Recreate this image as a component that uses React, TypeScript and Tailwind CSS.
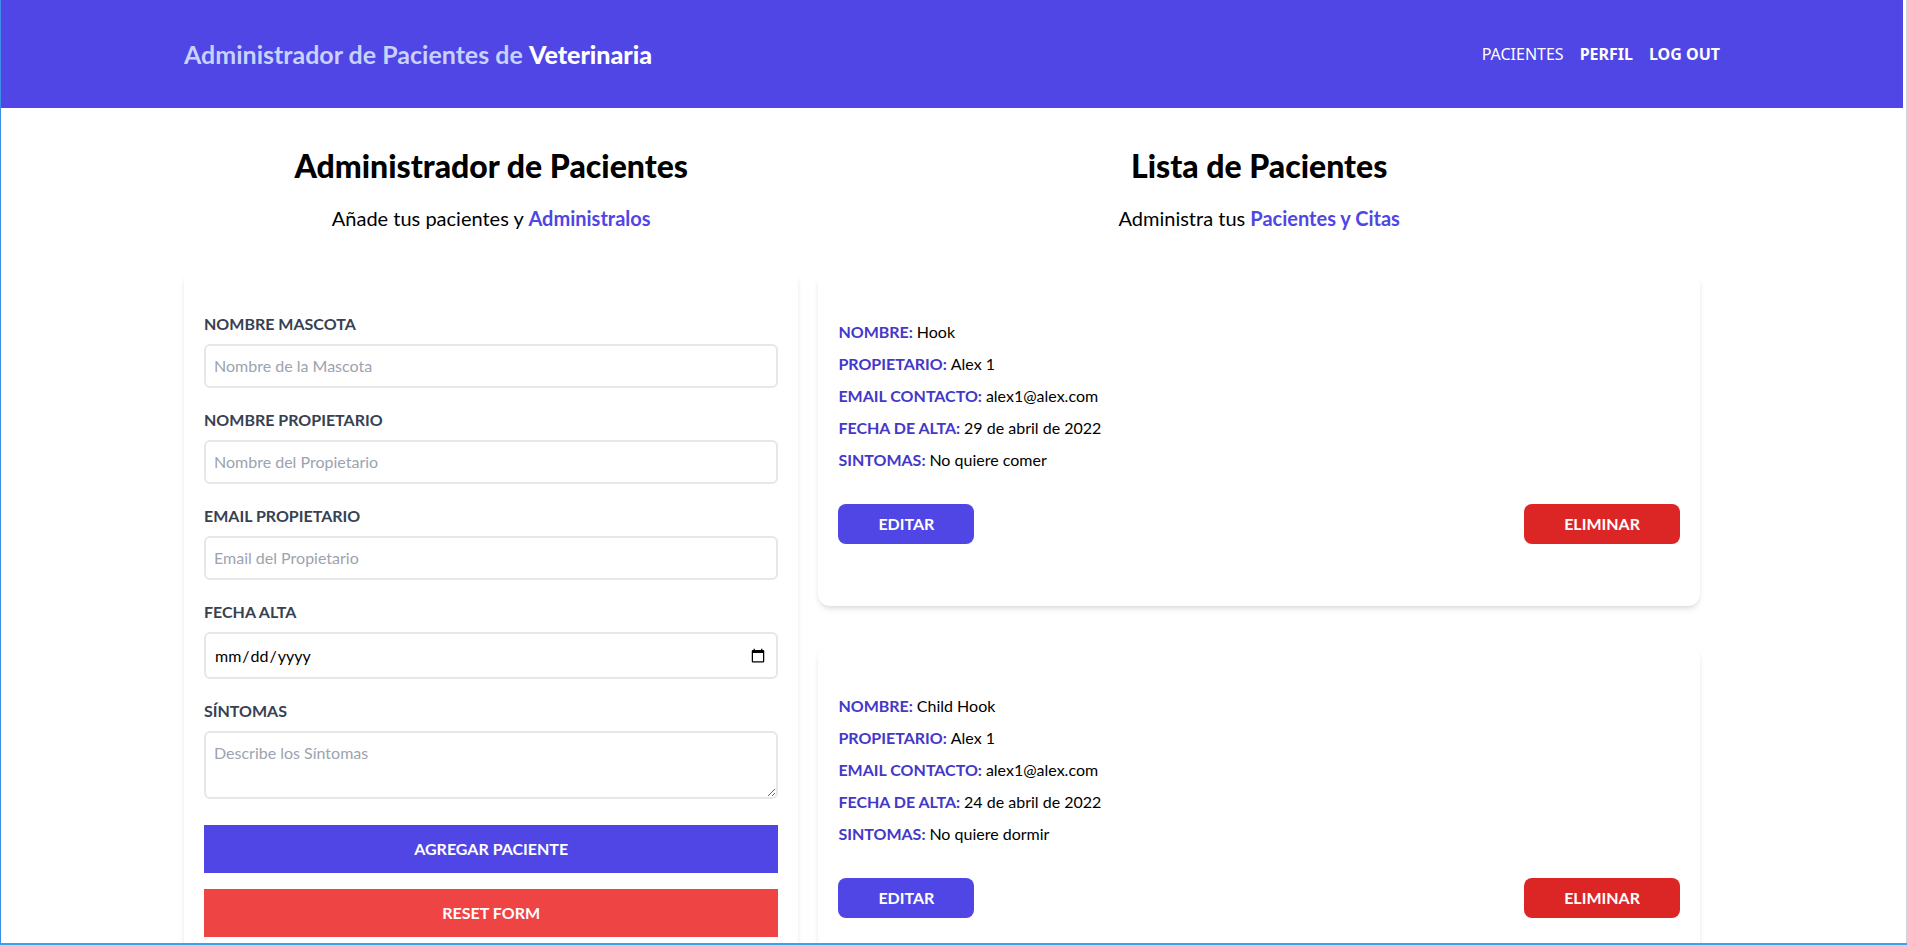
import { useState } from 'react';

interface Paciente {
  id: number;
  nombre: string;
  propietario: string;
  email: string;
  fecha: string;
  sintomas: string;
}

const pacientes_iniciales: Paciente[] = [
  {
    id: 1,
    nombre: 'Hook',
    propietario: 'Alex 1',
    email: 'alex1@alex.com',
    fecha: '29 de abril de 2022',
    sintomas: 'No quiere comer',
  },
  {
    id: 2,
    nombre: 'Child Hook',
    propietario: 'Alex 1',
    email: 'alex1@alex.com',
    fecha: '24 de abril de 2022',
    sintomas: 'No quiere dormir',
  },
];

const Header = () => (
  <header className="bg-[#4f46e5] py-10">
    <div className="container mx-auto flex items-center justify-between">
      <h1 className="text-[25px] leading-7 font-bold text-[#c7d2fe]">
        Administrador de Pacientes de{' '}
        <span className="font-black text-white">Veterinaria</span>
      </h1>
      <nav className="flex items-center gap-4 font-['Noto_Sans',sans-serif] text-base text-white uppercase">
        <a href="#" className="font-normal">Pacientes</a>
        <a href="#" className="font-bold">Perfil</a>
        <a href="#" className="font-bold">Log Out</a>
      </nav>
    </div>
  </header>
);

const Campo = ({ label, children }: { label: string; children: React.ReactNode }) => (
  <div className="mb-5">
    <label className="block text-[#374151] uppercase font-bold">{label}</label>
    {children}
  </div>
);

const Formulario = () => {
  const [nombre, setNombre] = useState('');
  const [propietario, setPropietario] = useState('');
  const [email, setEmail] = useState('');
  const [fecha, setFecha] = useState('');
  const [sintomas, setSintomas] = useState('');

  const input_cls =
    'border-2 border-[#e5e7eb] w-full p-2 mt-2 placeholder-[#9ca3af] rounded-md text-black outline-none';

  return (
    <form className="bg-white shadow-md rounded-lg py-10 px-5 mb-10">
      <Campo label="Nombre Mascota">
        <input
          type="text"
          placeholder="Nombre de la Mascota"
          className={input_cls}
          value={nombre}
          onChange={(e) => setNombre(e.target.value)}
        />
      </Campo>
      <Campo label="Nombre Propietario">
        <input
          type="text"
          placeholder="Nombre del Propietario"
          className={input_cls}
          value={propietario}
          onChange={(e) => setPropietario(e.target.value)}
        />
      </Campo>
      <Campo label="Email Propietario">
        <input
          type="email"
          placeholder="Email del Propietario"
          className={input_cls}
          value={email}
          onChange={(e) => setEmail(e.target.value)}
        />
      </Campo>
      <Campo label="Fecha Alta">
        <input
          type="date"
          className={input_cls + ' h-[47px]'}
          value={fecha}
          onChange={(e) => setFecha(e.target.value)}
        />
      </Campo>
      <Campo label="Síntomas">
        <textarea
          rows={2}
          placeholder="Describe los Síntomas"
          className={input_cls}
          value={sintomas}
          onChange={(e) => setSintomas(e.target.value)}
        />
      </Campo>
      <input
        type="submit"
        value="Agregar Paciente"
        className="bg-[#4f46e5] w-full p-3 text-white uppercase font-bold cursor-pointer"
      />
      <button
        type="button"
        className="bg-[#ef4444] w-full p-3 mt-4 text-white uppercase font-bold"
      >
        Reset Form
      </button>
    </form>
  );
};

const Dato = ({ label, valor }: { label: string; valor: string }) => (
  <p className="font-bold mb-2 text-[#4338ca] uppercase">
    {label}: <span className="font-normal normal-case text-black">{valor}</span>
  </p>
);

const TarjetaPaciente = ({ paciente }: { paciente: Paciente }) => (
  <div className="mx-5 my-10 bg-white shadow-md px-5 pt-[48px] pb-[62px] rounded-xl">
    <Dato label="Nombre" valor={paciente.nombre} />
    <Dato label="Propietario" valor={paciente.propietario} />
    <Dato label="Email Contacto" valor={paciente.email} />
    <Dato label="Fecha de Alta" valor={paciente.fecha} />
    <Dato label="Sintomas" valor={paciente.sintomas} />
    <div className="flex justify-between mt-[32px]">
      <button type="button" className="py-2 px-10 bg-[#4f46e5] text-white font-bold uppercase rounded-lg">
        Editar
      </button>
      <button type="button" className="py-2 px-10 bg-[#dc2626] text-white font-bold uppercase rounded-lg">
        Eliminar
      </button>
    </div>
  </div>
);

export default function App() {
  return (
    <div className="h-screen overflow-hidden flex bg-white border-l border-b-2 border-l-[#3b8fe8] border-b-[#3aa2ee] font-['Lato',sans-serif]">
      <div className="flex-1 min-w-0 flex flex-col">
        <Header />
        <main className="container mx-auto mt-10 flex">
          <section className="w-2/5">
            <h2 className="font-black text-[32px] leading-9 text-center">Administrador de Pacientes</h2>
            <p className="text-xl mt-5 text-center mb-10">
              Añade tus pacientes y{' '}
              <span className="text-[#4f46e5] font-bold">Administralos</span>
            </p>
            <Formulario />
          </section>
          <section className="w-3/5">
            <h2 className="font-black text-[32px] leading-9 text-center">Lista de Pacientes</h2>
            <p className="text-xl mt-5 text-center">
              Administra tus{' '}
              <span className="text-[#4f46e5] font-bold">Pacientes y Citas</span>
            </p>
            {pacientes_iniciales.map((p) => (
              <TarjetaPaciente key={p.id} paciente={p} />
            ))}
          </section>
        </main>
      </div>
      <div className="w-[4px] border-r border-gray-300 bg-white" />
    </div>
  );
}
